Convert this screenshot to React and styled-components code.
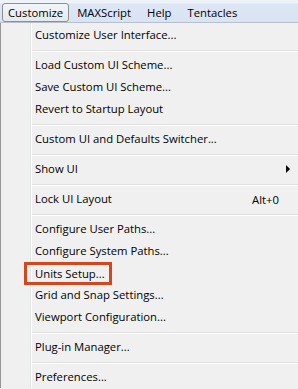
import React from "react";
import styled, { createGlobalStyle } from "styled-components";

const Global = createGlobalStyle`
  html, body { margin: 0; padding: 0; background: #f0f0f0; }
  body { font-family: "Open Sans", "Noto Sans", sans-serif; font-size: 11.3px; color: #000; }
`;

const Page = styled.div`
  position: relative;
  width: 298px;
  height: 389px;
  overflow: hidden;
  background: #f0f0f0;
`;

const MenuBar = styled.div`
  display: flex;
  align-items: center;
  height: 22px;
  padding-left: 2px;
  background: linear-gradient(#eef3fa 0px, #eef3fa 3px, #dde6f4 4px, #d9e3f3 100%);
  border-bottom: 1px solid #b7bfcb;
`;

const BarItem = styled.div`
  box-sizing: border-box;
  height: 19px;
  margin-top: 2px;
  display: flex;
  align-items: center;
  padding: 0 ${(p) => (p.$active ? "5px" : "7px")};
  border: 1px solid ${(p) => (p.$active ? "#8e8f8f" : "transparent")};
  border-radius: 3px;
  background: ${(p) => (p.$active ? "linear-gradient(#f3f5f8, #e4e9f0)" : "transparent")};
  white-space: nowrap;
`;

const Underline = styled.div`
  position: absolute;
  left: 0;
  top: 23px;
  width: 69px;
  height: 3px;
  background: #d8430f;
`;

const Menu = styled.div`
  position: relative;
  border-left: 1px solid #979797;
  padding-top: 1px;
  background: #f0f0f0;
  &::before {
    content: "";
    position: absolute;
    left: 29px;
    top: 0;
    bottom: 0;
    width: 1px;
    background: #e2e3e3;
    box-shadow: 1px 0 0 #ffffff;
  }
`;

const Item = styled.div`
  position: relative;
  display: flex;
  align-items: center;
  justify-content: space-between;
  height: 22px;
  padding-left: 34px;
  padding-right: 19px;
  white-space: nowrap;
`;

const Label = styled.span`
  display: inline-block;
  line-height: 16px;
  ${(p) =>
    p.$boxed &&
    `
    padding: 1px 4px 0 8px;
    margin-left: -8px;
    outline: 3px solid #d5461a;
  `}
`;

const Shortcut = styled.span``;

const Arrow = styled.span`
  position: absolute;
  right: 8px;
  top: 7px;
  width: 0;
  height: 0;
  border-top: 4px solid transparent;
  border-bottom: 4px solid transparent;
  border-left: 4px solid #000;
`;

const Separator = styled.div`
  height: 8px;
  display: flex;
  align-items: center;
  padding-left: 31px;
  &::after {
    content: "";
    flex: 1;
    height: 1px;
    background: #e0e0e0;
    box-shadow: 0 1px 0 #ffffff;
  }
`;

const groups = [
  [{ t: "Customize User Interface..." }],
  [{ t: "Load Custom UI Scheme..." }, { t: "Save Custom UI Scheme..." }, { t: "Revert to Startup Layout" }],
  [{ t: "Custom UI and Defaults Switcher..." }],
  [{ t: "Show UI", sub: true }],
  [{ t: "Lock UI Layout", key: "Alt+0" }],
  [
    { t: "Configure User Paths..." },
    { t: "Configure System Paths..." },
    { t: "Units Setup...", boxed: true },
    { t: "Grid and Snap Settings..." },
    { t: "Viewport Configuration..." },
  ],
  [{ t: "Plug-in Manager..." }],
  [{ t: "Preferences..." }],
];

export default function App() {
  return (
    <Page>
      <Global />
      <MenuBar>
        <BarItem $active>Customize</BarItem>
        <BarItem>MAXScript</BarItem>
        <BarItem>Help</BarItem>
        <BarItem>Tentacles</BarItem>
      </MenuBar>
      <Underline />
      <Menu>
        {groups.map((g, gi) => (
          <React.Fragment key={gi}>
            {gi > 0 && <Separator />}
            {g.map((it) => (
              <Item key={it.t}>
                <Label $boxed={it.boxed}>{it.t}</Label>
                {it.key && <Shortcut>{it.key}</Shortcut>}
                {it.sub && <Arrow />}
              </Item>
            ))}
          </React.Fragment>
        ))}
      </Menu>
    </Page>
  );
}
